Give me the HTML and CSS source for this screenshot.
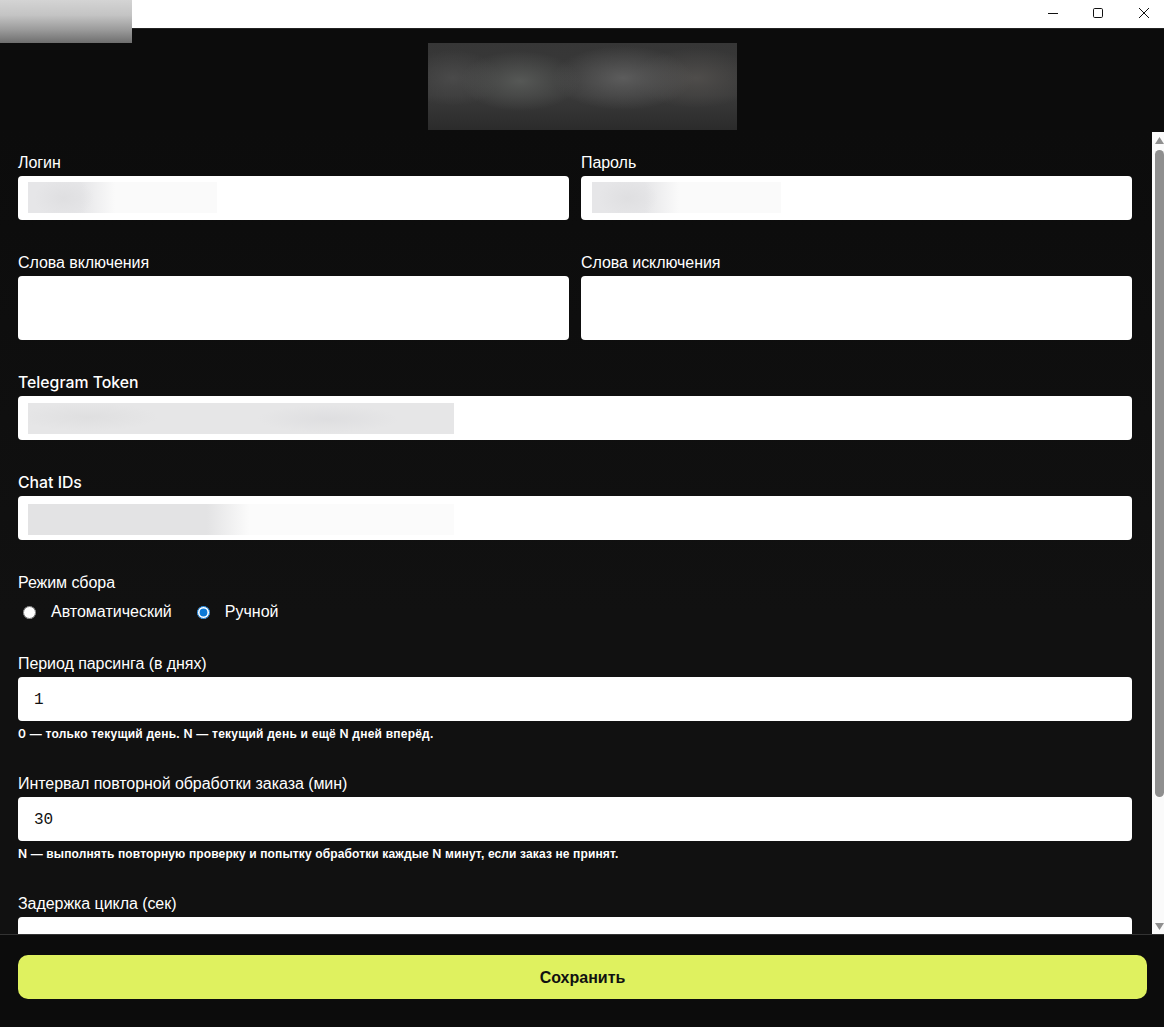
FILE: index.html
```html
<!DOCTYPE html>
<html lang="ru">

<head>
    <meta charset="UTF-8">
    <meta name="viewport" content="width=device-width, initial-scale=1.0">
    <title>Настройки</title>
    <link rel="stylesheet" href="styles.css">
</head>

<body>
    <div class="app">
        <div class="titlebar">
            <div class="app-icon"></div>
            <svg class="win-btn" width="10" height="10" viewBox="0 0 10 10"><path d="M0 5.5h10" stroke="#111" fill="none"/></svg>
            <svg class="win-btn" width="10" height="10" viewBox="0 0 10 10"><rect x=".5" y=".5" width="9" height="9" rx="1.2" stroke="#111" fill="none"/></svg>
            <svg class="win-btn win-close" width="10" height="10" viewBox="0 0 10 10"><path d="M0 0l10 10M10 0L0 10" stroke="#111" fill="none"/></svg>
        </div>

        <div class="header">
            <div class="logo"></div>
        </div>

        <div class="scroll-area">
            <div class="form">
                <div class="row">
                    <div class="field">
                        <label class="field-label" for="login">Логин</label>
                        <div class="input-wrap">
                            <input class="text-input" type="text" id="login">
                            <span class="blur blur-short"></span>
                        </div>
                    </div>
                    <div class="field">
                        <label class="field-label" for="password">Пароль</label>
                        <div class="input-wrap">
                            <input class="text-input" type="text" id="password">
                            <span class="blur blur-short blur-right"></span>
                        </div>
                    </div>
                </div>

                <div class="row">
                    <div class="field">
                        <label class="field-label" for="include">Слова включения</label>
                        <textarea class="text-input text-area" id="include"></textarea>
                    </div>
                    <div class="field">
                        <label class="field-label" for="exclude">Слова исключения</label>
                        <textarea class="text-input text-area" id="exclude"></textarea>
                    </div>
                </div>

                <div class="field">
                    <label class="field-label latin" for="token">Telegram Token</label>
                    <div class="input-wrap">
                        <input class="text-input" type="text" id="token">
                        <span class="blur blur-token"></span>
                    </div>
                </div>

                <div class="field">
                    <label class="field-label latin" for="chats">Chat IDs</label>
                    <div class="input-wrap">
                        <input class="text-input" type="text" id="chats">
                        <span class="blur blur-chats"></span>
                    </div>
                </div>

                <div class="field field-radio">
                    <div class="field-label">Режим сбора</div>
                    <div class="radio-row">
                        <label class="radio-item"><input type="radio" name="mode">Автоматический</label>
                        <label class="radio-item"><input type="radio" name="mode" checked>Ручной</label>
                    </div>
                </div>

                <div class="field">
                    <label class="field-label" for="period">Период парсинга (в днях)</label>
                    <input class="text-input num-input" type="text" id="period" value="1">
                    <div class="hint hint-wide"><span class="latin">0</span> — только текущий день. <span class="latin">N</span> — текущий день и ещё <span class="latin">N</span> дней вперёд.</div>
                </div>

                <div class="field">
                    <label class="field-label" for="interval">Интервал повторной обработки заказа (мин)</label>
                    <input class="text-input num-input" type="text" id="interval" value="30">
                    <div class="hint"><span class="latin">N</span> — выполнять повторную проверку и попытку обработки каждые <span class="latin">N</span> минут, если заказ не принят.</div>
                </div>

                <div class="field">
                    <label class="field-label" for="delay">Задержка цикла (сек)</label>
                    <input class="text-input num-input" type="text" id="delay">
                </div>
            </div>

            <div class="scrollbar">
                <svg class="arrow" width="9" height="7" viewBox="0 0 9 7"><path d="M4.5 0L9 7H0z" fill="#8f8f8f"/></svg>
                <div class="thumb"></div>
                <svg class="arrow arrow-down" width="9" height="7" viewBox="0 0 9 7"><path d="M0 0h9L4.5 7z" fill="#8f8f8f"/></svg>
            </div>
        </div>

        <div class="footer">
            <button class="save-btn">Сохранить</button>
        </div>
    </div>
</body>

</html>
```

FILE: styles.css
```css
html, body {
    margin: 0;
    height: 100%;
    overflow: hidden;
}

body {
    background: #0c0c0c;
    color: #fff;
    font-family: "Liberation Sans", Arial, sans-serif;
    font-size: 16px;
}

.app {
    height: 100vh;
    display: flex;
    flex-direction: column;
    position: relative;
}

/* Title bar */
.titlebar {
    height: 29px;
    flex: none;
    background: #fff;
    border-bottom: 1px solid #222;
    display: flex;
    align-items: center;
    justify-content: flex-end;
    gap: 35px;
    padding-right: 15px;
    padding-bottom: 2px;
    box-sizing: border-box;
}

.win-close {
    margin-left: 1px;
}

.app-icon {
    position: absolute;
    left: 0;
    top: 0;
    width: 132px;
    height: 43px;
    background: linear-gradient(180deg, #d4d4d4 0%, #c4c4c4 35%, #9a9a9a 70%, #6e6e6e 100%);
}

.header {
    height: 101px;
    flex: none;
    display: flex;
    justify-content: center;
    align-items: flex-end;
    padding-left: 1px;
    box-sizing: border-box;
}

.logo {
    width: 309px;
    height: 87px;
    background:
        radial-gradient(ellipse 60px 30px at 92px 38px, #565856, transparent),
        radial-gradient(ellipse 70px 32px at 195px 35px, #5c5c5c, transparent),
        radial-gradient(ellipse 62px 30px at 268px 35px, #4f4d4b, transparent),
        radial-gradient(ellipse 48px 28px at 25px 35px, #4a4a4a, transparent),
        linear-gradient(180deg, #363636 0%, #3a3a3a 60%, #2b2b2b 100%);
}

/* Form */
.scroll-area {
    flex: 1;
    min-height: 0;
    display: flex;
    background: linear-gradient(180deg, #0c0c0c 0%, #111 60%);
}

.form {
    flex: 1;
    min-width: 0;
    overflow: hidden;
    padding: 22px 20px 0 18px;
}

.row {
    display: grid;
    grid-template-columns: 1fr 1fr;
    gap: 12px;
}

.field {
    margin-bottom: 32px;
}

.field-radio {
    margin-bottom: 31px;
}

.field-label {
    display: block;
    height: 20px;
    line-height: 22px;
    margin-bottom: 4px;
    letter-spacing: -0.06px;
}

.field-label.latin {
    font-family: Inter, sans-serif;
    font-size: 15.8px;
    font-weight: 500;
    line-height: 21px;
    letter-spacing: 0;
}

.input-wrap {
    position: relative;
}

.text-input {
    display: block;
    width: 100%;
    height: 44px;
    box-sizing: border-box;
    border: none;
    border-radius: 4px;
    background: #fff;
    padding: 0 16px;
    margin: 0;
    outline: none;
    resize: none;
}

.text-area {
    height: 64px;
}

.num-input {
    font-family: "Liberation Mono", monospace;
    font-size: 16px;
    color: #111;
    padding-top: 2px;
}

.blur {
    position: absolute;
    left: 10px;
    top: 6px;
    height: 31px;
}

.blur-right {
    left: 11px;
}

.blur-short {
    width: 189px;
    background:
        radial-gradient(ellipse 30px 20px at 36px 16px, rgba(222, 222, 224, .9), rgba(222, 222, 224, 0) 100%),
        linear-gradient(90deg, #e6e6e8 0%, #e6e6e8 28%, #fafafa 46%, #fafafa 100%);
}

.blur-token {
    top: 7px;
    width: 426px;
    background:
        radial-gradient(ellipse 70px 14px at 60px 14px, #dfdfe0, transparent),
        radial-gradient(ellipse 70px 14px at 300px 16px, #dedee0, transparent),
        #e6e6e7;
}

.blur-chats {
    top: 8px;
    width: 426px;
    background:
        linear-gradient(90deg, #e3e3e4 0%, #e3e3e4 42%, #fbfbfb 52%, #fbfbfb 100%);
}

.radio-row {
    display: flex;
    gap: 20px;
    height: 20px;
    margin-top: 10px;
}

.radio-item {
    display: flex;
    align-items: center;
    line-height: 22px;
}

.radio-item input {
    width: 13px;
    height: 13px;
    margin: 0 15px 0 5px;
    accent-color: #0a78d6;
}

.hint {
    font-size: 12px;
    font-weight: bold;
    line-height: 18px;
    height: 16px;
    margin-top: 4px;
    letter-spacing: 0.13px;
}

.hint-wide {
    letter-spacing: 0.22px;
}

.hint .latin {
    font-family: Inter, sans-serif;
    font-weight: 600;
}

/* Scrollbar */
.scrollbar {
    width: 12px;
    flex: none;
    margin-top: 2px;
    background: #fafafa;
    position: relative;
}

.arrow {
    position: absolute;
    left: 3px;
    top: 5px;
}

.arrow-down {
    top: auto;
    bottom: 4px;
}

.thumb {
    position: absolute;
    left: 3px;
    right: 0;
    top: 18px;
    height: 647px;
    background: #8f8f8f;
    border-radius: 5px;
}

/* Footer */
.footer {
    height: 93px;
    flex: none;
    box-sizing: border-box;
    border-top: 1px solid #333;
    padding: 20px 17px 0 18px;
    background: #0c0c0c;
}

.save-btn {
    display: block;
    width: 100%;
    height: 44px;
    border: none;
    border-radius: 10px;
    background: #dff15f;
    color: #111;
    font-family: "Liberation Sans", Arial, sans-serif;
    font-size: 16px;
    font-weight: bold;
    padding-top: 2px;
}
```
